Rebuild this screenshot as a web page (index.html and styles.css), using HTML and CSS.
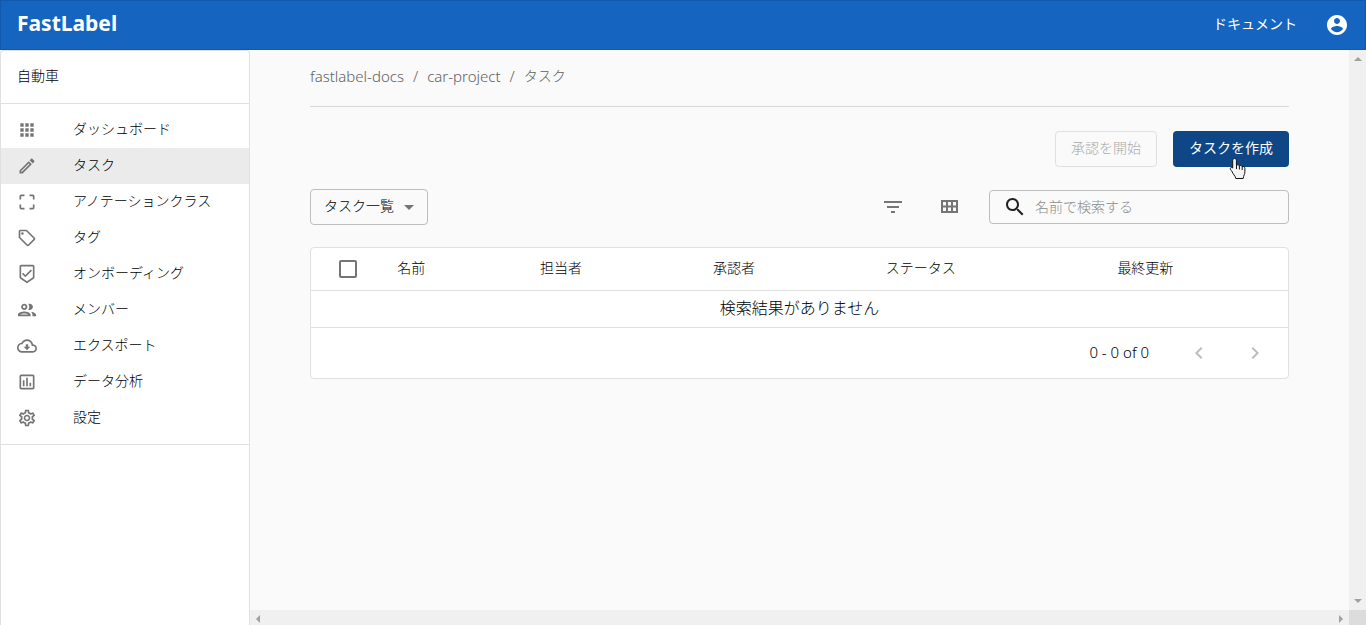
FILE: index.html
```html
<!DOCTYPE html>
<html lang="ja">
<head>
<meta charset="utf-8">
<meta name="viewport" content="width=device-width, initial-scale=1">
<title>FastLabel</title>
<link rel="stylesheet" href="styles.css">
</head>
<body>
<div class="app">
  <header class="topbar">
    <a class="brand" href="#">FastLabel</a>
    <a class="docs-link" href="#">ドキュメント</a>
    <button class="account" type="button" aria-label="アカウント">
      <svg class="icon" viewBox="0 0 24 24"><path d="M12 2C6.48 2 2 6.48 2 12s4.48 10 10 10 10-4.48 10-10S17.52 2 12 2zm0 3c1.66 0 3 1.34 3 3s-1.34 3-3 3-3-1.340-3-3 1.340-3 3-3zm0 14.200c-2.500 0-4.710-1.280-6-3.220.03-1.990 4-3.080 6-3.080 1.990 0 5.970 1.090 6 3.080-1.290 1.940-3.500 3.220-6 3.220z"/></svg>
    </button>
  </header>
  <div class="body">
    <aside class="sidebar">
      <div class="workspace">自動車</div>
      <nav class="nav">
        <a class="nav-item" href="#"><svg class="nav-icon" viewBox="0 0 24 24"><path d="M4 8h4V4H4v4zm6 12h4v-4h-4v4zm-6 0h4v-4H4v4zm0-6h4v-4H4v4zm6 0h4v-4h-4v4zm6-10v4h4V4h-4zm-6 4h4V4h-4v4zm6 6h4v-4h-4v4zm0 6h4v-4h-4v4z"/></svg><span>ダッシュボード</span></a>
        <a class="nav-item active" href="#" aria-current="page"><svg class="nav-icon" viewBox="0 0 24 24"><path d="M14.060 9.020l.92.92L5.920 19H5v-.92l9.060-9.060M17.660 3c-.25 0-.51.1-.7.29l-1.830 1.830 3.750 3.750 1.830-1.830c.39-.39.39-1.020 0-1.410l-2.340-2.340c-.2-.2-.45-.29-.71-.29zm-3.600 3.190L3 17.250V21h3.750L17.810 9.940l-3.750-3.750z"/></svg><span>タスク</span></a>
        <a class="nav-item" href="#"><svg class="nav-icon" viewBox="0 0 24 24"><path d="M3 5v4h2V5h4V3H5c-1.100 0-2 .9-2 2zm2 10H3v4c0 1.100.9 2 2 2h4v-2H5v-4zm14 4h-4v2h4c1.100 0 2-.9 2-2v-4h-2v4zm0-16h-4v2h4v4h2V5c0-1.100-.9-2-2-2z"/></svg><span>アノテーションクラス</span></a>
        <a class="nav-item" href="#"><svg class="nav-icon" viewBox="0 0 24 24"><path d="M21.410 11.580l-9-9C12.050 2.220 11.550 2 11 2H4c-1.100 0-2 .9-2 2v7c0 .55.22 1.050.59 1.420l9 9c.36.36.86.58 1.410.58s1.050-.22 1.410-.59l7-7c.37-.36.59-.86.59-1.410s-.23-1.060-.59-1.420zM13 20.010L4 11V4h7v-.01l9 9-7 7.020z"/><circle cx="6.500" cy="6.500" r="1.500"/></svg><span>タグ</span></a>
        <a class="nav-item" href="#"><svg class="nav-icon" viewBox="0 0 24 24"><path d="M19 1H5c-1.100 0-1.990.9-1.990 2L3 15.930c0 .69.35 1.300.88 1.660L12 23l8.110-5.410c.53-.36.88-.97.88-1.660L21 3c0-1.100-.9-2-2-2zm-7 19.600l-7-4.660V3h14v12.930l-7 4.670zm-2.010-7.420l-2.580-2.590L6 12l4 4 8-8-1.420-1.420z"/></svg><span>オンボーディング</span></a>
        <a class="nav-item" href="#"><svg class="nav-icon" viewBox="1 1 22 22"><path d="M9 13.750c-2.340 0-7 1.170-7 3.500V19h14v-1.750c0-2.330-4.660-3.500-7-3.500zM4.340 17c.84-.58 2.870-1.250 4.660-1.250s3.820.67 4.660 1.250H4.340zM9 12c1.930 0 3.500-1.570 3.500-3.500S10.930 5 9 5 5.500 6.570 5.500 8.500 7.070 12 9 12zm0-5c.83 0 1.500.67 1.500 1.500S9.830 10 9 10s-1.500-.67-1.500-1.500S8.170 7 9 7zm7.040 6.810c1.160.84 1.960 1.960 1.960 3.440V19h4v-1.750c0-2.020-3.500-3.170-5.960-3.440zM15 12c1.930 0 3.500-1.570 3.500-3.500S16.930 5 15 5c-.54 0-1.040.13-1.500.35.63.89 1 1.980 1 3.150s-.37 2.260-1 3.150c.46.22.96.35 1.500.35z"/></svg><span>メンバー</span></a>
        <a class="nav-item" href="#"><svg class="nav-icon" viewBox="0 0 24 24"><path d="M19.350 10.040C18.670 6.590 15.640 4 12 4 9.110 4 6.600 5.640 5.350 8.040 2.340 8.360 0 10.910 0 14c0 3.310 2.690 6 6 6h13c2.760 0 5-2.240 5-5 0-2.640-2.050-4.780-4.650-4.960zM19 18H6c-2.210 0-4-1.790-4-4 0-2.050 1.530-3.760 3.560-3.970l1.070-.11.5-.95C8.080 7.140 9.940 6 12 6c2.620 0 4.880 1.860 5.390 4.430l.3 1.500 1.530.11c1.560.1 2.780 1.410 2.780 2.960 0 1.650-1.350 3-3 3zm-5.550-8h-2.900v3H8l4 4 4-4h-2.550z"/></svg><span>エクスポート</span></a>
        <a class="nav-item" href="#"><svg class="nav-icon" viewBox="0 0 24 24"><path d="M9 17H7v-7h2v7zm4 0h-2V7h2v10zm4 0h-2v-4h2v4zm2 2H5V5h14v14zm0-16H5c-1.100 0-2 .9-2 2v14c0 1.100.9 2 2 2h14c1.100 0 2-.9 2-2V5c0-1.100-.9-2-2-2z"/></svg><span>データ分析</span></a>
        <a class="nav-item" href="#"><svg class="nav-icon" viewBox="0 0 24 24"><path d="M19.430 12.980c.04-.32.07-.64.07-.98 0-.34-.03-.66-.07-.98l2.110-1.650c.19-.15.24-.42.12-.64l-2-3.460c-.09-.16-.26-.25-.44-.25-.06 0-.12.01-.17.03l-2.490 1c-.52-.4-1.080-.73-1.690-.98l-.38-2.650C14.460 2.180 14.250 2 14 2h-4c-.25 0-.46.18-.49.42l-.38 2.650c-.61.25-1.170.59-1.690.98l-2.490-1c-.06-.02-.12-.03-.18-.03-.17 0-.34.09-.43.25l-2 3.460c-.13.22-.07.49.12.64l2.110 1.650c-.04.32-.07.65-.07.98 0 .33.03.66.07.98l-2.110 1.650c-.19.15-.24.42-.12.64l2 3.460c.09.16.26.25.44.25.06 0 .12-.01.17-.03l2.490-1c.52.4 1.080.73 1.690.98l.38 2.650c.03.24.24.42.49.42h4c.25 0 .46-.18.49-.42l.38-2.650c.61-.25 1.170-.59 1.690-.98l2.490 1c.06.02.12.03.18.03.17 0 .34-.09.43-.25l2-3.460c.12-.22.07-.49-.12-.64l-2.110-1.650zm-1.980-1.710c.04.31.05.52.05.73 0 .21-.02.43-.05.73l-.14 1.130.89.7 1.080.84-.7 1.210-1.270-.51-1.040-.42-.9.68c-.43.32-.84.56-1.250.73l-1.060.43-.16 1.130-.2 1.350h-1.400l-.19-1.350-.16-1.130-1.060-.43c-.43-.18-.83-.41-1.230-.71l-.91-.7-1.060.43-1.270.51-.7-1.210 1.080-.84.89-.7-.14-1.130c-.03-.31-.05-.54-.05-.74s.02-.43.05-.73l.14-1.130-.89-.7-1.080-.84.7-1.210 1.270.51 1.040.42.9-.68c.43-.32.84-.56 1.250-.73l1.060-.43.16-1.130.2-1.350h1.390l.19 1.350.16 1.130 1.060.43c.43.18.83.41 1.230.71l.91.7 1.060-.43 1.270-.51.7 1.210-1.070.85-.89.7.14 1.130zM12 8c-2.210 0-4 1.790-4 4s1.790 4 4 4 4-1.790 4-4-1.790-4-4-4zm0 6c-1.100 0-2-.9-2-2s.9-2 2-2 2 .9 2 2-.9 2-2 2z"/></svg><span>設定</span></a>
      </nav>
    </aside>
    <div class="viewport">
      <main class="content">
        <nav class="breadcrumb" aria-label="パンくず">
          <a href="#">fastlabel-docs</a><span>/</span><a href="#">car-project</a><span>/</span><a class="current" href="#">タスク</a>
        </nav>
        <div class="actions">
          <button class="btn btn-outline" type="button" disabled>承認を開始</button>
          <button class="btn btn-primary" type="button">タスクを作成<svg class="pointer" viewBox="0 0 18 23"><path d="M5.500 1.500c1.200 0 1.900.8 1.900 1.900v4.700c.7-.6 2.400-.5 2.900.6.900-.6 2.400-.3 2.700.9 1.300-.5 2.900.1 2.900 1.700v3.500c0 2.500-1.300 3.300-1.700 6.700H6.800c-.4-2.700-2.800-4.100-4-7.300-.6-.8-1.600-1.800-1.500-2.700.2-1.200 1.600-1.300 2.400-.5V3.400c0-1.100.7-1.900 1.800-1.900z"/><path class="fingers" d="M7.500 8v4M10.400 8.800V12.500M13.200 10v3"/></svg></button>
        </div>
        <div class="toolbar">
          <div class="select-wrap">
            <select class="view-select" aria-label="表示"><option>タスク一覧</option></select>
            <svg class="caret" viewBox="0 0 24 24"><path d="M7 10l5 5 5-5z"/></svg>
          </div>
          <div class="tools">
            <button class="icon-btn" type="button" aria-label="フィルター"><svg class="icon" viewBox="0 0 24 24"><path d="M10 18h4v-2h-4v2zM3 6v2h18V6H3zm3 7h12v-2H6v2z"/></svg></button>
            <button class="icon-btn" type="button" aria-label="グリッド表示"><svg class="icon" viewBox="0 0 24 24"><path fill-rule="evenodd" d="M4 5h17v13H4zM6 7v3.500h3V7zM11 7v3.500h3V7zM16 7v3.500h3V7zM6 12.500V16h3v-3.500zM11 12.500V16h3v-3.500zM16 12.500V16h3v-3.500z"/></svg></button>
          </div>
          <label class="search">
            <svg class="icon" viewBox="0 0 24 24"><path d="M15.500 14h-.79l-.28-.27C15.410 12.590 16 11.110 16 9.500 16 5.910 13.090 3 9.500 3S3 5.910 3 9.500 5.910 16 9.500 16c1.610 0 3.090-.59 4.230-1.570l.27.28v.79l5 4.990L20.490 19l-4.990-5zm-6 0C7.010 14 5 11.990 5 9.500S7.010 5 9.500 5 14 7.010 14 9.500 11.990 14 9.500 14z"/></svg>
            <input type="search" placeholder="名前で検索する" aria-label="名前で検索する">
          </label>
        </div>
        <section class="card">
          <table class="tasks">
            <colgroup><col class="c-check"><col class="c-name"><col class="c-user"><col class="c-user"><col class="c-status"><col></colgroup>
            <thead><tr><th class="check"><input type="checkbox" aria-label="すべて選択"></th><th>名前</th><th>担当者</th><th>承認者</th><th>ステータス</th><th>最終更新</th></tr></thead>
            <tbody><tr><td class="empty" colspan="6">検索結果がありません</td></tr></tbody>
          </table>
          <footer class="pager">
            <span>0 - 0 of 0</span>
            <button class="page-btn" type="button" aria-label="前へ" disabled><svg class="icon" viewBox="0 0 24 24"><path d="M15.410 7.410L14 6l-6 6 6 6 1.410-1.410L10.830 12z"/></svg></button>
            <button class="page-btn" type="button" aria-label="次へ" disabled><svg class="icon" viewBox="0 0 24 24"><path d="M10 6L8.590 7.410 13.170 12l-4.580 4.590L10 18l6-6z"/></svg></button>
          </footer>
        </section>
      </main>
      <div class="bar bar-v" aria-hidden="true"><svg class="arrow" viewBox="0 0 17 17"><path d="M5 11h8L9 7z"/></svg><svg class="arrow" viewBox="0 0 17 17"><path d="M5 6h8l-4 4z"/></svg></div>
      <div class="bar bar-h" aria-hidden="true"><svg class="arrow" viewBox="0 0 17 17"><path d="M10 5v8L6 9z"/></svg><svg class="arrow" viewBox="0 0 17 17"><path d="M7 5v8l4-4z"/></svg></div>
      <div class="corner" aria-hidden="true"></div>
    </div>
  </div>
</div>
</body>
</html>
```
FILE: styles.css
```css
* { box-sizing: border-box; }

body {
  margin: 0;
  background: #fafafa;
  color: #000;
  font: 300 14px/20px "Noto Sans", "Noto Sans CJK JP", sans-serif;
}

a { color: inherit; text-decoration: none; }
button, input, select { font: inherit; color: inherit; }
button { padding: 0; border: 0; background: none; }
svg { display: block; fill: currentColor; }

.app { display: flex; flex-direction: column; height: 100vh; }

.topbar {
  display: flex;
  align-items: center;
  height: 50px;
  padding: 0 16px;
  border: 1px solid #1259ac;
  background: #1565c0;
  color: #fff;
}
.brand { margin-right: auto; font-size: 21px; font-weight: 700; line-height: 28px; padding-bottom: 4px; }
.docs-link { margin-right: 28px; padding-bottom: 3px; font-weight: 400; }
.icon { width: 24px; height: 24px; }

.body { display: flex; flex: 1; min-height: 0; }

.sidebar {
  flex: none;
  width: 250px;
  border: 1px solid #e0e0e0;
  border-bottom: 0;
  border-radius: 4px 4px 0 0;
  background: #fff;
}
.workspace { padding: 15px 16px 17px; border-bottom: 1px solid #e0e0e0; }
.nav { padding: 8px 0; border-bottom: 1px solid #e0e0e0; }
.nav-item { display: flex; align-items: center; gap: 36px; height: 36px; padding: 0 16px; }
.nav-item span { padding-bottom: 3px; }
.nav-item.active { background: #ebebeb; }
.nav-icon { width: 20px; height: 20px; color: #757575; }

.viewport {
  display: grid;
  flex: 1;
  grid-template: minmax(0, 1fr) 15px / minmax(0, 1fr) 17px;
}
.content { padding: 16px 60px; }

.breadcrumb {
  display: flex;
  gap: 9px;
  padding-bottom: 20px;
  border-bottom: 1px solid #d8d8d8;
  color: #616161;
  font-size: 15px;
}
.breadcrumb .current { font-size: 14px; }

.actions { display: flex; justify-content: flex-end; gap: 16px; margin: 24px 0 22px; }
.btn { position: relative; height: 36px; padding: 0 15px 2px; border-radius: 4px; }
.btn-outline { border: 1px solid #e0e0e0; padding: 0 14px 2px; width: 102px; color: #aaa; }
.btn-primary { background: #0e4686; color: #fff; font-weight: 400; padding: 0 16px 3px; }
.pointer { position: absolute; left: 56px; top: 26px; width: 18px; height: 23px; fill: #f4f4f4; stroke: #111; }
.fingers { fill: none; }

.toolbar { display: flex; align-items: center; }
.select-wrap { position: relative; margin-right: auto; }
.view-select {
  appearance: none;
  width: 118px;
  height: 36px;
  padding: 0 13px 2px;
  border: 1px solid #bdbdbd;
  border-radius: 4px;
  background: #fafafa;
}
.caret { position: absolute; right: 7px; top: 6px; width: 24px; height: 24px; color: #757575; pointer-events: none; }
.tools { display: flex; gap: 32px; margin-right: 28px; color: #757575; }
.search {
  display: flex;
  align-items: center;
  gap: 8px;
  width: 300px;
  height: 34px;
  padding: 0 13px;
  border: 1px solid #bdbdbd;
  border-radius: 4px;
}
.search .icon { color: #212121; }
.search input { flex: 1; min-width: 0; padding: 0; border: 0; outline: 0; background: none; }
.search input::placeholder { color: #8a8a8a; }

.card { margin-top: 22px; border: 1px solid #e0e0e0; border-radius: 4px; background: #fff; }
.tasks { width: 100%; border-collapse: separate; border-spacing: 0; table-layout: fixed; }
.c-check { width: 7.2%; }
.c-name { width: 14.6%; }
.c-user { width: 17.7%; }
.c-status { width: 23.7%; }
.tasks th { height: 43px; padding: 0 16px 3px; border-bottom: 1px solid #e0e0e0; font-weight: 300; text-align: left; }
.tasks .check { padding: 0 0 0 28px; }
.check input {
  display: block;
  appearance: none;
  width: 18px;
  height: 18px;
  margin: 0;
  border: 2px solid #757575;
  border-radius: 2px;
}
.tasks .empty { height: 37px; padding: 0 0 2px; border-bottom: 1px solid #e0e0e0; font-size: 16px; text-align: center; }
.pager { display: flex; align-items: center; justify-content: flex-end; gap: 32px; height: 50px; padding: 0 21px; }
.pager span { margin-right: 6px; padding-bottom: 3px; font-size: 15px; }
.page-btn { color: #bdbdbd; }

.bar { display: flex; justify-content: space-between; background: #f0f0f0; color: #a0a0a0; }
.bar-v { flex-direction: column; }
.arrow { width: 17px; height: 17px; }
.corner { background: #dcdcdc; }
```
